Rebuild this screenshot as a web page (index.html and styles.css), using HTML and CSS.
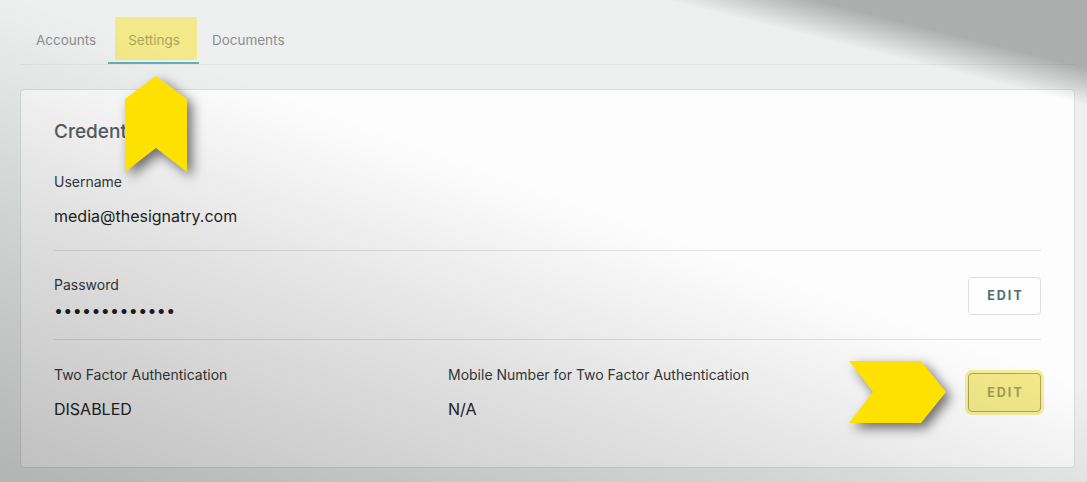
FILE: index.html
```html
<!DOCTYPE html>
<html lang="en">
<head>
    <meta charset="UTF-8">
    <meta name="viewport" content="width=device-width, initial-scale=1.0">
    <title>Settings</title>
    <link rel="stylesheet" href="styles.css">
</head>
<body>
    <div class="page">
        <nav class="tabs">
            <a class="tab">Accounts</a>
            <a class="tab active marked">Settings</a>
            <a class="tab">Documents</a>
        </nav>

        <div class="card">
            <h2 class="card-title">Credentials</h2>

            <div class="row">
                <div class="field">
                    <div class="label">Username</div>
                    <div class="value">media@thesignatry.com</div>
                </div>
            </div>

            <div class="row row-edit">
                <div class="field">
                    <div class="label">Password</div>
                    <div class="value dots">&bull;&bull;&bull;&bull;&bull;&bull;&bull;&bull;&bull;&bull;&bull;&bull;&bull;</div>
                </div>
                <button class="btn-edit btn-raise">EDIT</button>
            </div>

            <div class="row row-edit row-last">
                <div class="field col-first">
                    <div class="label">Two Factor Authentication</div>
                    <div class="value">DISABLED</div>
                </div>
                <div class="field">
                    <div class="label">Mobile Number for Two Factor Authentication</div>
                    <div class="value">N/A</div>
                </div>
                <button class="btn-edit marked">EDIT</button>
            </div>
        </div>
    </div>

    <!-- luz de la captura -->
    <div class="shade"></div>

    <!-- flechas de anotacion -->
    <svg class="arrow arrow-up" width="80" height="115" viewBox="0 0 80 115">
        <polygon points="32,1 63,24 63,97 32,73 1,97 1,24" fill="#ffe100"/>
    </svg>
    <svg class="arrow arrow-right" width="115" height="80" viewBox="0 0 115 80">
        <polygon points="1,1 73,1 98,32 73,63 1,63 25,32" fill="#ffe100"/>
    </svg>
</body>
</html>
```

FILE: styles.css
```css
body {
    margin: 0;
    font-family: Inter, "Noto Sans", sans-serif;
    background-color: #eef0f0;
    width: 1087px;
    height: 482px;
    overflow: hidden;
    position: relative;
}

.page {
    padding: 17px 12px 0 20px;
}

.tabs {
    display: flex;
    height: 47px;
    border-bottom: 1px solid #e1e5e5;
}

.tab {
    position: relative;
    z-index: 0;
    padding: 0 16px;
    font-size: 13.5px;
    line-height: 47px;
    color: #8b8f90;
}

.tab.active::after {
    content: "";
    position: absolute;
    left: -4px;
    right: -3px;
    bottom: 0;
    height: 2px;
    background: #62b2ae;
}

.tab.marked {
    color: #aca459;
}

.tab.marked::before {
    content: "";
    position: absolute;
    left: 3px;
    right: -1px;
    top: 0;
    bottom: 4px;
    background: #f3e98a;
    z-index: -1;
}

.card {
    margin-top: 24px;
    height: 379px;
    box-sizing: border-box;
    background: #fdfdfd;
    border: 1px solid #dcdfdf;
    border-radius: 4px;
    padding: 30px 33px 0 33px;
}

.card-title {
    margin: 0;
    font-size: 19px;
    font-weight: 500;
    line-height: 24px;
    color: #585e62;
}

.row {
    display: flex;
    align-items: center;
    padding: 28px 0 23px;
    border-bottom: 1px solid #e2e4e4;
}

.row-edit {
    padding: 24px 0 18px;
}

.row-last {
    border-bottom: none;
    padding-top: 25px;
}

.field {
    flex: 1;
}

.col-first {
    flex: 0 0 394px;
}

.label {
    font-size: 14px;
    line-height: 20px;
    color: #383a3b;
}

.value {
    margin-top: 13px;
    font-size: 16px;
    line-height: 22px;
    color: #252627;
}

.dots {
    margin-top: 4px;
    font-size: 16px;
    letter-spacing: 0.35px;
    color: #1e1e1e;
}

.btn-edit {
    width: 73px;
    height: 38px;
    background: #fefefe;
    border: 1px solid #dcdfdf;
    border-radius: 4px;
    font-family: Inter, sans-serif;
    font-size: 12.5px;
    font-weight: 700;
    letter-spacing: 2px;
    color: #4f6f6f;
    padding: 0 0 0 2px;
}

.btn-raise {
    margin-bottom: 5px;
}

.btn-edit.marked {
    height: 39px;
    background: #f3e98a;
    border-color: #aea758;
    color: #a29c4f;
    box-shadow: 0 0 0 3px #f6ee98;
}

.shade {
    position: absolute;
    inset: 0;
    pointer-events: none;
    background:
        linear-gradient(14deg, rgba(0, 0, 0, 0) 86%, rgba(0, 0, 0, 0.28) 91%),
        linear-gradient(20deg, rgba(0, 0, 0, 0.25) 0%, rgba(0, 0, 0, 0.1) 35%, rgba(0, 0, 0, 0) 56%);
}

.arrow {
    position: absolute;
    filter: drop-shadow(5px 5px 6px rgba(0, 0, 0, 0.55));
}

.arrow-up {
    left: 124px;
    top: 75px;
}

.arrow-right {
    left: 848px;
    top: 360px;
}
```
